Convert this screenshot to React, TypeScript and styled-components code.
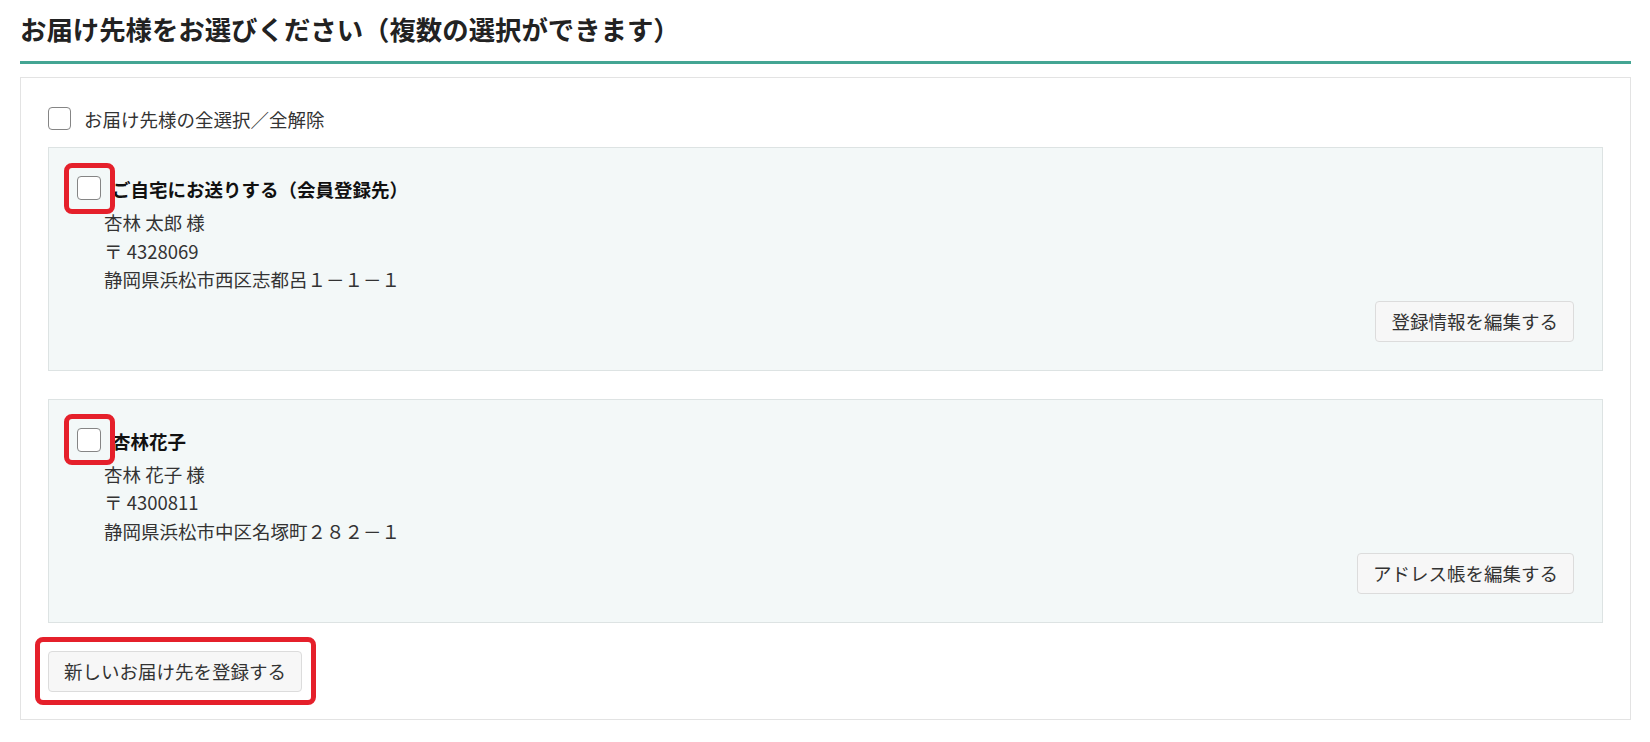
import React from "react";
import styled, { createGlobalStyle } from "styled-components";

const GlobalStyle = createGlobalStyle`
  body {
    margin: 0;
    background: #fff;
    font-family: "Noto Sans CJK JP", "Noto Sans", sans-serif;
    color: #333;
  }
`;

const Page = styled.div`
  width: 1611px;
  margin-left: 20px;
`;

const Heading = styled.h2`
  margin: 0;
  padding: 11px 0 14px;
  font-size: 26.4px;
  line-height: 36px;
  font-weight: 700;
  color: #222;
  border-bottom: 3px solid #44a593;
`;

const Panel = styled.section`
  margin-top: 13px;
  border: 1px solid #e3e3e3;
  padding: 29px 27px 27px;
`;

const SelectAllRow = styled.label`
  display: flex;
  align-items: center;
  gap: 13px;
  height: 23px;
  margin-bottom: 17px;
  font-size: 18.5px;
  color: #333;
`;

const Checkbox = styled.input.attrs({ type: "checkbox" })<{ $size?: number }>`
  appearance: none;
  flex: none;
  margin: 0;
  width: ${(p) => p.$size ?? 23}px;
  height: ${(p) => p.$size ?? 23}px;
  background: #fff;
  border: 1.5px solid #858585;
  border-radius: 4px;
`;

const Highlight = styled.span`
  position: relative;
  display: inline-flex;
  flex: none;

  &::after {
    content: "";
    position: absolute;
    inset: -13.5px;
    border: 5px solid #e5202b;
    border-radius: 8px;
    pointer-events: none;
    z-index: 1;
  }
`;

const Card = styled.div`
  background: #f3f8f8;
  border: 1px solid #dde3e3;
  padding: 28px;
  margin-bottom: 28px;
`;

const CardHead = styled.div`
  display: flex;
  align-items: flex-start;
  gap: 11px;
`;

const CardTitle = styled.div`
  font-size: 18.5px;
  line-height: 32px;
  margin-top: -3px;
  font-weight: 700;
  color: #111;
`;

const Details = styled.div`
  margin: 3px 0 0 27px;
  font-size: 18.5px;
  line-height: 28.6px;
  color: #333;
`;

const Actions = styled.div`
  display: flex;
  justify-content: flex-end;
  margin-top: 7px;
`;

const Button = styled.button`
  height: 41px;
  padding: 0 15px;
  font-family: inherit;
  font-size: 18.5px;
  color: #333;
  background: #f7f7f7;
  border: 1px solid #dcdcdc;
  border-radius: 4px;
`;

const Footer = styled.div`
  display: flex;
`;

interface Address {
  title: string;
  name: string;
  zip: string;
  address: string;
  action: string;
}

const addresses: Address[] = [
  {
    title: "ご自宅にお送りする（会員登録先）",
    name: "杏林 太郎 様",
    zip: "〒 4328069",
    address: "静岡県浜松市西区志都呂１－１－１",
    action: "登録情報を編集する",
  },
  {
    title: "杏林花子",
    name: "杏林 花子 様",
    zip: "〒 4300811",
    address: "静岡県浜松市中区名塚町２８２－１",
    action: "アドレス帳を編集する",
  },
];

const AddressCard = ({ item }: { item: Address }) => (
  <Card>
    <CardHead>
      <Highlight>
        <Checkbox $size={24} />
      </Highlight>
      <CardTitle>{item.title}</CardTitle>
    </CardHead>
    <Details>
      <div>{item.name}</div>
      <div>{item.zip}</div>
      <div>{item.address}</div>
    </Details>
    <Actions>
      <Button>{item.action}</Button>
    </Actions>
  </Card>
);

export default function App() {
  return (
    <>
      <GlobalStyle />
      <Page>
        <Heading>お届け先様をお選びください（複数の選択ができます）</Heading>
        <Panel>
          <SelectAllRow>
            <Checkbox />
            お届け先様の全選択／全解除
          </SelectAllRow>
          {addresses.map((item) => (
            <AddressCard key={item.title} item={item} />
          ))}
          <Footer>
            <Highlight>
              <Button>新しいお届け先を登録する</Button>
            </Highlight>
          </Footer>
        </Panel>
      </Page>
    </>
  );
}
